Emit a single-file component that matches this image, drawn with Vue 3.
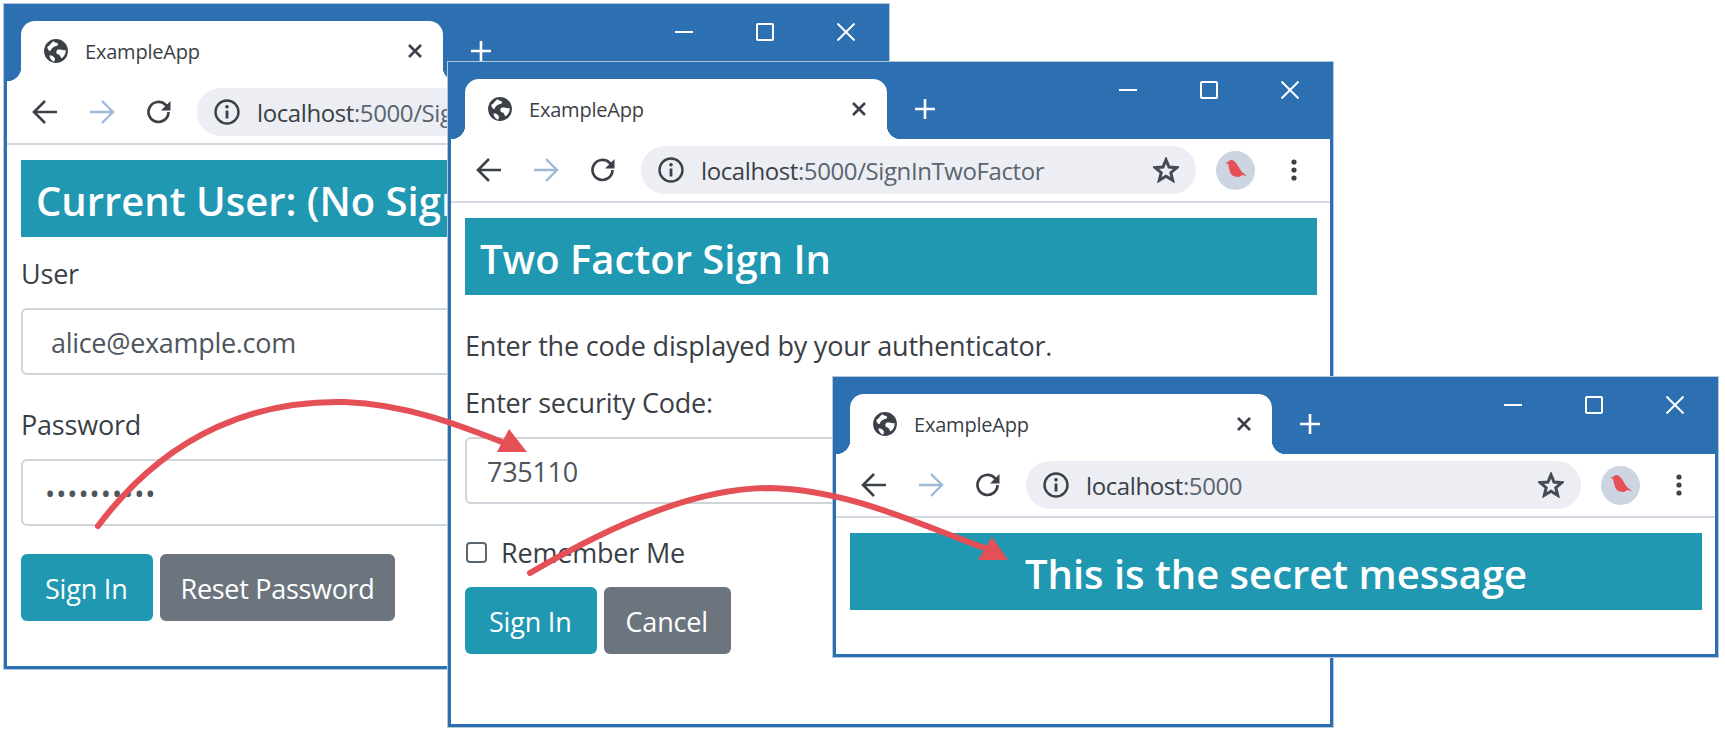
<script setup>
const windows = [
  { id: "first", url: "localhost", path: ":5000/SignIn" },
  { id: "second", url: "localhost", path: ":5000/SignInTwoFactor" },
  { id: "third", url: "localhost", path: ":5000" },
];
</script>

<template>
  <div class="desktop">
    <div v-for="win in windows" :key="win.id" class="window" :class="win.id">
      <div class="titlebar">
        <div class="tab">
          <svg class="globe" width="26" height="26" viewBox="0 0 24 24">
            <circle cx="12" cy="12" r="11" fill="#3c4048" />
            <path d="M4 8c3-1 3-4 6-5 1 2 4 1 4 3-1 2-3 1-5 3-2 1-1 3-3 3-1-1-2-2-2-4zM13 11c3-1 5 1 8 0 0 3-1 6-4 8-1-2-1-3-3-4-2 0-2-3-1-4zM6 16c2 0 4 1 5 3 0 1 0 2-1 3-2-1-4-3-4-6z" fill="#fff" />
          </svg>
          <span class="tab-title">ExampleApp</span>
          <svg class="tab-close" width="16" height="16" viewBox="0 0 16 16">
            <path d="M2 2l12 12M14 2L2 14" stroke="#3c4048" stroke-width="2.6" fill="none" />
          </svg>
        </div>
        <svg class="plus" width="22" height="22" viewBox="0 0 22 22">
          <path d="M11 1v20M1 11h20" stroke="#fff" stroke-width="2.6" fill="none" />
        </svg>
        <div class="controls">
          <span class="control">
            <svg width="18" height="18" viewBox="0 0 18 18"><path d="M0 9h18" stroke="#fff" stroke-width="2" fill="none" /></svg>
          </span>
          <span class="control">
            <svg width="18" height="18" viewBox="0 0 18 18"><rect x="1" y="1" width="16" height="16" rx="1" stroke="#fff" stroke-width="2" fill="none" /></svg>
          </span>
          <span class="control">
            <svg width="18" height="18" viewBox="0 0 18 18"><path d="M0.5 0.5l17 17M17.5 0.5l-17 17" stroke="#fff" stroke-width="2" fill="none" /></svg>
          </span>
        </div>
      </div>

      <div class="toolbar">
        <svg class="nav-icon" width="26" height="26" viewBox="0 0 26 26">
          <path d="M25 13H2M13 2L2 13l11 11" stroke="#3c4048" stroke-width="2.6" fill="none" />
        </svg>
        <svg class="nav-icon" width="26" height="26" viewBox="0 0 26 26">
          <path d="M1 13h23M13 2l11 11-11 11" stroke="#9dbbd6" stroke-width="2.4" fill="none" />
        </svg>
        <svg class="nav-icon" width="26" height="26" viewBox="0 0 26 26">
          <path d="M22.5 13a10 10 0 1 1-3-7.2L23 9" stroke="#3c4048" stroke-width="2.7" fill="none" />
          <path d="M24.5 2v9.5H15z" fill="#3c4048" />
        </svg>
        <div class="pill">
          <svg class="info" width="26" height="26" viewBox="0 0 26 26">
            <circle cx="13" cy="13" r="11.5" stroke="#3c4048" stroke-width="2.4" fill="none" />
            <path d="M13 11.5v8" stroke="#3c4048" stroke-width="2.8" fill="none" />
            <circle cx="13" cy="7.8" r="1.8" fill="#3c4048" />
          </svg>
          <span class="url"><span class="host">{{ win.url }}</span>{{ win.path }}</span>
          <svg class="star" width="26" height="26" viewBox="0 0 26 26">
            <path d="M13 2.8l3 7.3 7.8.6-6 5 1.9 7.6-6.7-4.1-6.7 4.1 1.9-7.6-6-5 7.8-.6z" stroke="#454a54" stroke-width="3" fill="none" />
          </svg>
        </div>
        <div class="avatar">
          <svg width="24" height="22" viewBox="0 0 24 22">
            <path d="M1 4l3-1c1-2 4-3 6-1 3 2 5 7 8 11l5 4-5-1c-2 3-8 2-10 0C5 13 5 8 4 5z" fill="#e45056" />
          </svg>
        </div>
        <svg class="menu" width="8" height="24" viewBox="0 0 8 24">
          <circle cx="4" cy="4" r="2.6" fill="#3c4048" />
          <circle cx="4" cy="12" r="2.6" fill="#3c4048" />
          <circle cx="4" cy="20" r="2.6" fill="#3c4048" />
        </svg>
      </div>

      <div class="page">
        <template v-if="win.id === 'first'">
          <h3 class="banner">Current User: (No Signed In User)</h3>
          <div class="first-form">
            <div class="group">
              <label>User</label>
              <input class="field wide" type="text" value="alice@example.com" readonly />
            </div>
            <div class="group">
              <label>Password</label>
              <input class="field secret" type="password" value="mysecret12" readonly />
            </div>
            <div class="buttons">
              <button class="btn info-btn">Sign In</button>
              <button class="btn grey-btn reset">Reset Password</button>
            </div>
          </div>
        </template>

        <template v-else-if="win.id === 'second'">
          <h3 class="banner">Two Factor Sign In</h3>
          <p class="hint">Enter the code displayed by your authenticator.</p>
          <div class="group">
            <label>Enter security Code:</label>
            <input class="field" type="text" value="735110" readonly />
          </div>
          <div class="check-row">
            <input class="check" type="checkbox" />
            <span>Remember Me</span>
          </div>
          <div class="buttons">
            <button class="btn info-btn">Sign In</button>
            <button class="btn grey-btn">Cancel</button>
          </div>
        </template>

        <h3 v-else class="banner center">This is the secret message</h3>
      </div>
    </div>

    <svg class="arrows" width="1725" height="734" viewBox="0 0 1725 734">
      <path d="M98 526C170 430 260 400 345 402C405 404 460 425 512 446" stroke="#e45056" stroke-width="6" stroke-linecap="round" fill="none" />
      <path d="M509 429L497 452H527Z" fill="#e45056" />
      <path d="M530 573C620 520 700 488 770 488C850 490 920 525 985 548" stroke="#e45056" stroke-width="6" stroke-linecap="round" fill="none" />
      <path d="M992 537L978 560H1008Z" fill="#e45056" />
    </svg>
  </div>
</template>

<style scoped>
.desktop {
  position: relative;
  width: 1725px;
  height: 734px;
  overflow: hidden;
  background: #fff;
  color: #3a3f47;
  font-family: "Open Sans", "Noto Sans", sans-serif;
}
.window {
  position: absolute;
  width: 885px;
  box-sizing: border-box;
  border: 3px solid #2d70b1;
  outline: 1px solid #b4c8dc;
  background: #fff;
  overflow: hidden;
}
.first {
  left: 4px;
  top: 4px;
  height: 665px;
}
.second {
  left: 448px;
  top: 62px;
  height: 665px;
}
.third {
  left: 833px;
  top: 377px;
  height: 280px;
}
.titlebar {
  display: flex;
  align-items: flex-start;
  height: 74px;
  background: #2d70b1;
}
.tab {
  position: relative;
  display: flex;
  align-items: center;
  box-sizing: border-box;
  width: 422px;
  height: 60px;
  margin: 14px 0 0 14px;
  padding: 0 20px 0 22px;
  background: #fff;
  border-radius: 14px 14px 0 0;
}
.tab::before,
.tab::after {
  content: "";
  position: absolute;
  bottom: 0;
  width: 14px;
  height: 14px;
}
.tab::before {
  right: 100%;
  background: radial-gradient(circle at 0 0, transparent 14px, #fff 14.5px);
}
.tab::after {
  left: 100%;
  background: radial-gradient(circle at 100% 0, transparent 14px, #fff 14.5px);
}
.tab-title {
  margin-left: 16px;
  font-size: 20px;
  letter-spacing: -0.2px;
}
.tab-close {
  margin-left: auto;
}
.plus {
  margin: 33px 0 0 27px;
}
.controls {
  display: flex;
  margin-left: auto;
}
.control {
  display: flex;
  align-items: center;
  justify-content: center;
  width: 81px;
  height: 50px;
}
.toolbar {
  display: flex;
  align-items: center;
  height: 64px;
  box-sizing: border-box;
  padding: 0 0 0 25px;
  border-bottom: 2px solid #d3d8e3;
}
.nav-icon {
  margin-right: 31px;
}
.pill {
  display: flex;
  align-items: center;
  box-sizing: border-box;
  width: 555px;
  height: 48px;
  margin-left: -6px;
  padding: 0 17px;
  background: #eceef3;
  border-radius: 24px;
}
.url {
  margin-left: 17px;
  font-size: 24px;
  letter-spacing: -0.4px;
  color: #5b6470;
  white-space: nowrap;
}
.host {
  color: #3a3f47;
}
.star {
  margin-left: auto;
}
.avatar {
  display: flex;
  align-items: center;
  justify-content: center;
  width: 39px;
  height: 39px;
  margin-left: 20px;
  background: #cdd5e2;
  border-radius: 50%;
}
.menu {
  margin-left: 35px;
}
.page {
  padding: 15px 13px 0 14px;
}
.first .page {
  width: 1100px;
}
.banner {
  display: flex;
  align-items: center;
  box-sizing: border-box;
  height: 77px;
  margin: 0;
  padding: 3px 0 0 15px;
  background: #2098b2;
  color: #fff;
  font-size: 40px;
  font-weight: 600;
  letter-spacing: 0;
  white-space: nowrap;
}
.banner.center {
  justify-content: center;
  padding-left: 0;
}
.first-form {
  padding-top: 15px;
}
.group {
  margin-bottom: 28px;
}
label {
  display: block;
  height: 44px;
  margin-bottom: 12px;
  font-size: 27px;
  line-height: 44px;
  letter-spacing: -0.2px;
}
.hint {
  margin: 29px 0 13px;
  font-size: 27px;
  line-height: 44px;
  letter-spacing: -0.2px;
}
.field {
  display: block;
  box-sizing: border-box;
  width: 100%;
  height: 67px;
  padding: 2px 20px 0;
  border: 2px solid #ced4da;
  border-radius: 6px;
  background: #fff;
  color: #4e555d;
  font-family: inherit;
  font-size: 27px;
  letter-spacing: -0.3px;
  outline: none;
}
.field.wide {
  padding-left: 28px;
}
.field.secret {
  padding-left: 22px;
  letter-spacing: 1px;
}
.check-row {
  display: flex;
  align-items: center;
  height: 40px;
  margin-bottom: 15px;
  font-size: 27px;
  letter-spacing: -0.2px;
}
.check {
  box-sizing: border-box;
  width: 21px;
  height: 21px;
  margin: 0 14px 0 1px;
  appearance: none;
  border: 2px solid #5c6672;
  border-radius: 4px;
  background: #fff;
}
.buttons {
  display: flex;
  gap: 7px;
}
.btn {
  height: 67px;
  padding: 2px 0 0;
  border: none;
  border-radius: 6px;
  color: #fff;
  font-family: inherit;
  font-size: 27px;
  letter-spacing: -0.2px;
}
.info-btn {
  padding-left: 24px;
  padding-right: 25px;
  background: #2098b2;
}
.grey-btn {
  padding-left: 22px;
  padding-right: 23px;
  background: #6c757d;
}
.grey-btn.reset {
  padding-left: 21px;
  padding-right: 20px;
  letter-spacing: -0.3px;
}
.arrows {
  position: absolute;
  left: 0;
  top: 0;
  pointer-events: none;
}
</style>
